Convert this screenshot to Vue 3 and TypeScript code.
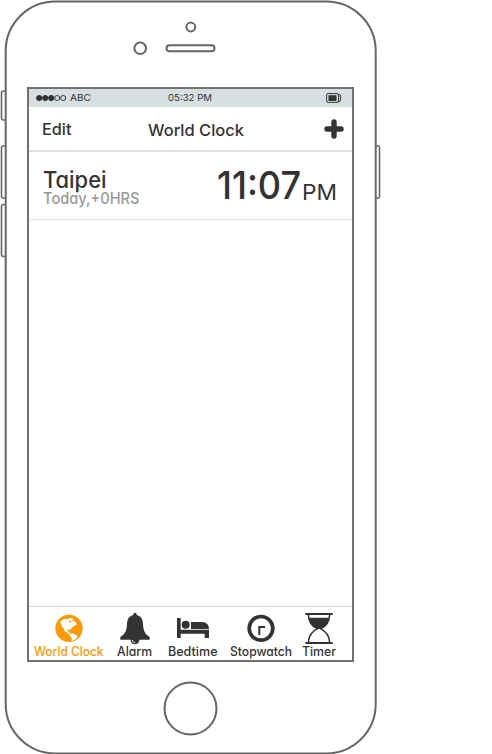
<script setup lang="ts">
import { h } from 'vue'

interface LabelProps {
  text: string
  width: number
  size: number
  weight?: number
}

// A text line whose box is exactly its cap height, fitted to a given width.
const Label = (props: LabelProps) => {
  const height = Math.round(props.size * 0.727 * 2) / 2
  return h(
    'svg',
    { width: props.width, height, class: 'label' },
    h(
      'text',
      {
        x: 0,
        y: height,
        'font-size': props.size,
        'font-weight': props.weight ?? 500,
        textLength: props.width,
        lengthAdjust: 'spacingAndGlyphs',
        fill: 'currentColor',
      },
      props.text,
    ),
  )
}
Label.props = ['text', 'width', 'size', 'weight']

const tabs = [
  { id: 'world', label: 'World Clock', width: 69.5, active: true },
  { id: 'alarm', label: 'Alarm', width: 35, active: false },
  { id: 'bed', label: 'Bedtime', width: 49.5, active: false },
  { id: 'stopwatch', label: 'Stopwatch', width: 62, active: false },
  { id: 'timer', label: 'Timer', width: 34, active: false },
]
</script>

<template>
  <div class="phone">
    <svg class="shell" width="382" height="754" viewBox="0 0 382 754">
      <g fill="#fff" stroke="#666" stroke-width="1.6">
        <rect x="1.5" y="91" width="8" height="29" rx="2" />
        <rect x="1.5" y="146" width="8" height="52" rx="2" />
        <rect x="1.5" y="204.5" width="8" height="52" rx="2" />
        <rect x="371" y="146" width="8.5" height="52" rx="1.5" />
      </g>
      <g fill="#fff" stroke="#666" stroke-width="2">
        <rect x="5.7" y="1.5" width="370" height="752" rx="49.5" />
        <circle cx="190.8" cy="27" r="4.4" />
        <circle cx="140.2" cy="48.3" r="5.8" />
        <rect x="166.500" y="45.3" width="48" height="6" rx="3" />
        <circle cx="190.5" cy="708.5" r="26" />
      </g>
    </svg>

    <main class="screen">
      <div class="status">
        <svg class="signal" width="31" height="8" viewBox="0 0 31 8">
          <g stroke="#333" stroke-width="1">
            <circle cx="3.2" cy="4" r="2.6" fill="#333" />
            <circle cx="9.2" cy="4" r="2.6" fill="#333" />
            <circle cx="15.2" cy="4" r="2.6" fill="#333" />
            <circle cx="21.2" cy="4" r="2.5" fill="none" />
            <circle cx="27.2" cy="4" r="2.5" fill="none" />
          </g>
        </svg>
        <Label class="carrier" text="ABC" :width="21" :size="9.2" :weight="400" />
        <Label class="now" text="05:32 PM" :width="44" :size="9.2" :weight="400" />
        <svg class="battery" width="16" height="10" viewBox="0 0 16 10">
          <rect x=".6" y=".6" width="12" height="8.8" rx="1.5" fill="none" stroke="#333" />
          <rect x="2.5" y="2.2" width="8" height="5.8" fill="#333" />
          <path d="M12.500 1Q14.700 1 14.700 5T12.500 9" fill="none" stroke="#333" />
        </svg>
      </div>

      <header class="header">
        <Label class="edit" text="Edit" :width="29.5" :size="15.8" />
        <Label class="title" text="World Clock" :width="96" :size="16.5" />
        <svg class="plus" width="20" height="20" viewBox="0 0 20 20">
          <path d="M10 3V17M3 10H17" stroke="#333" stroke-width="5.4" stroke-linecap="round" />
        </svg>
      </header>

      <section class="clock">
        <div class="place">
          <Label class="city" text="Taipei" :width="63.5" :size="22.5" />
          <Label class="offset" text="Today,+0HRS" :width="96.500" :size="15.5" />
        </div>
        <div class="time">
          <Label text="11:07" :width="84" :size="38.5" :weight="500" />
          <Label class="ampm" text="PM" :width="35" :size="21.5" :weight="400" />
        </div>
      </section>

      <nav class="tabs">
        <div v-for="tab in tabs" :key="tab.id" class="tab" :class="{ active: tab.active }">
          <svg v-if="tab.id === 'world'" class="icon" width="34" height="36" viewBox="-51 -52 102 108">
            <circle cx="0" cy="0" r="41" fill="currentColor" />
            <path d="M-27-17L-22-24-12-29-4-27 2-30 9-30 13-27 8-23 14-23 20-18 25-11 20-11 16-7 11-5 7 0 5 6 2 3-4 4-5 8-1 9 0 13 5 16 12 15 19 19 26 23 22 31 13 36 7 39 8 29 2 22 1 17-6 13-13 9-16 1-21-5-23-13Z" fill="#fff" />
            <path d="M3-24L7-20 3-17-1-20Z" fill="currentColor" />
          </svg>
          <svg v-else-if="tab.id === 'alarm'" class="icon" width="34" height="36" viewBox="-51 -52 102 108">
            <path d="M0-47C4-47 5-45 5-40 18-37 23-27 24-13 25 8 30 17 44 26V34H-44V26C-30 17-25 8-24-13-23-27-18-37-5-40-5-45-4-47 0-47Z" fill="currentColor" />
            <circle cx="0" cy="35" r="13" fill="currentColor" />
            <path d="M-8 35Q-7 43 1 43" fill="none" stroke="#fff" stroke-width="2.5" />
          </svg>
          <svg v-else-if="tab.id === 'bed'" class="icon" width="34" height="36" viewBox="-51 -52 102 108">
            <path d="M-48-31H-37V4H48V29H35V16H-37V29H-48ZM-6-19H27Q48-18 48 2H-6Z" fill="currentColor" />
            <circle cx="-22" cy="-11" r="12" fill="currentColor" />
          </svg>
          <svg v-else-if="tab.id === 'stopwatch'" class="icon" width="34" height="36" viewBox="-51 -52 102 108">
            <circle cx="0" cy="0" r="35.500" fill="none" stroke="currentColor" stroke-width="11" />
            <path d="M-5 20V-4H12" fill="none" stroke="currentColor" stroke-width="6" />
          </svg>
          <svg v-else class="icon" width="34" height="36" viewBox="-51 -52 102 108">
            <path d="M-41-43H41M-41 44H41" stroke="currentColor" stroke-width="6" />
            <path d="M-32-41C-31-17-18-4-4 1-20 8-31 23-32 43M32-41C31-17 18-4 4 1 20 8 31 23 32 43" fill="none" stroke="currentColor" stroke-width="4.5" />
            <path d="M-31-32H31C27-13 17-3 5 2H-5C-17-3-27-13-31-32Z" fill="currentColor" />
          </svg>
          <Label :text="tab.label" :width="tab.width" :size="12.8" />
        </div>
      </nav>
    </main>
  </div>
</template>

<style>
body {
  background: #fff;
}
</style>

<style scoped>
.phone {
  position: relative;
  box-sizing: border-box;
  width: 382px;
  height: 754px;
  padding: 87px 0 0 27px;
  color: #333;
  font-family: Inter, Lato, sans-serif;
  font-feature-settings: 'cv11' 1;
}
.shell {
  position: absolute;
  inset: 0;
}
svg {
  display: block;
  flex: none;
}
.label {
  overflow: visible;
}
.screen {
  position: relative;
  box-sizing: border-box;
  width: 327px;
  height: 575px;
  border: 2px solid #707070;
  display: flex;
  flex-direction: column;
  background: #fff;
}
.status {
  height: 18px;
  flex: none;
  display: flex;
  align-items: center;
  padding-left: 7px;
  background: #d7dfe1;
}
.carrier,
.now {
  margin-bottom: 1px;
}
.carrier {
  margin-left: 3px;
}
.now {
  margin-left: 77px;
}
.battery {
  margin-left: 114px;
}
.header {
  box-sizing: border-box;
  height: 45px;
  flex: none;
  display: flex;
  align-items: center;
  padding-left: 12.5px;
  border-bottom: 2px solid #e0e0e0;
}
.title {
  margin-left: 76.5px;
  margin-top: 2px;
}
.plus {
  margin-left: 80.5px;
}
.clock {
  box-sizing: border-box;
  height: 68px;
  flex: none;
  display: flex;
  justify-content: space-between;
  padding: 19px 15px 0 13.5px;
  border-bottom: 1px solid #e3e3e3;
}
.offset {
  margin-top: 4.5px;
  color: #999;
}
.time {
  display: flex;
  height: 28px;
  align-items: flex-end;
  gap: 1px;
}
.tabs {
  box-sizing: border-box;
  height: 54px;
  margin-top: auto;
  display: grid;
  grid-template-columns: 80px 51px 65px 72px 44px;
  border-top: 1px solid #d8d8d8;
}
.tab {
  display: flex;
  flex-direction: column;
  align-items: center;
  padding-top: 4px;
}
.tab .label {
  margin-top: -1px;
}
.active {
  color: #ff9900;
}
</style>
